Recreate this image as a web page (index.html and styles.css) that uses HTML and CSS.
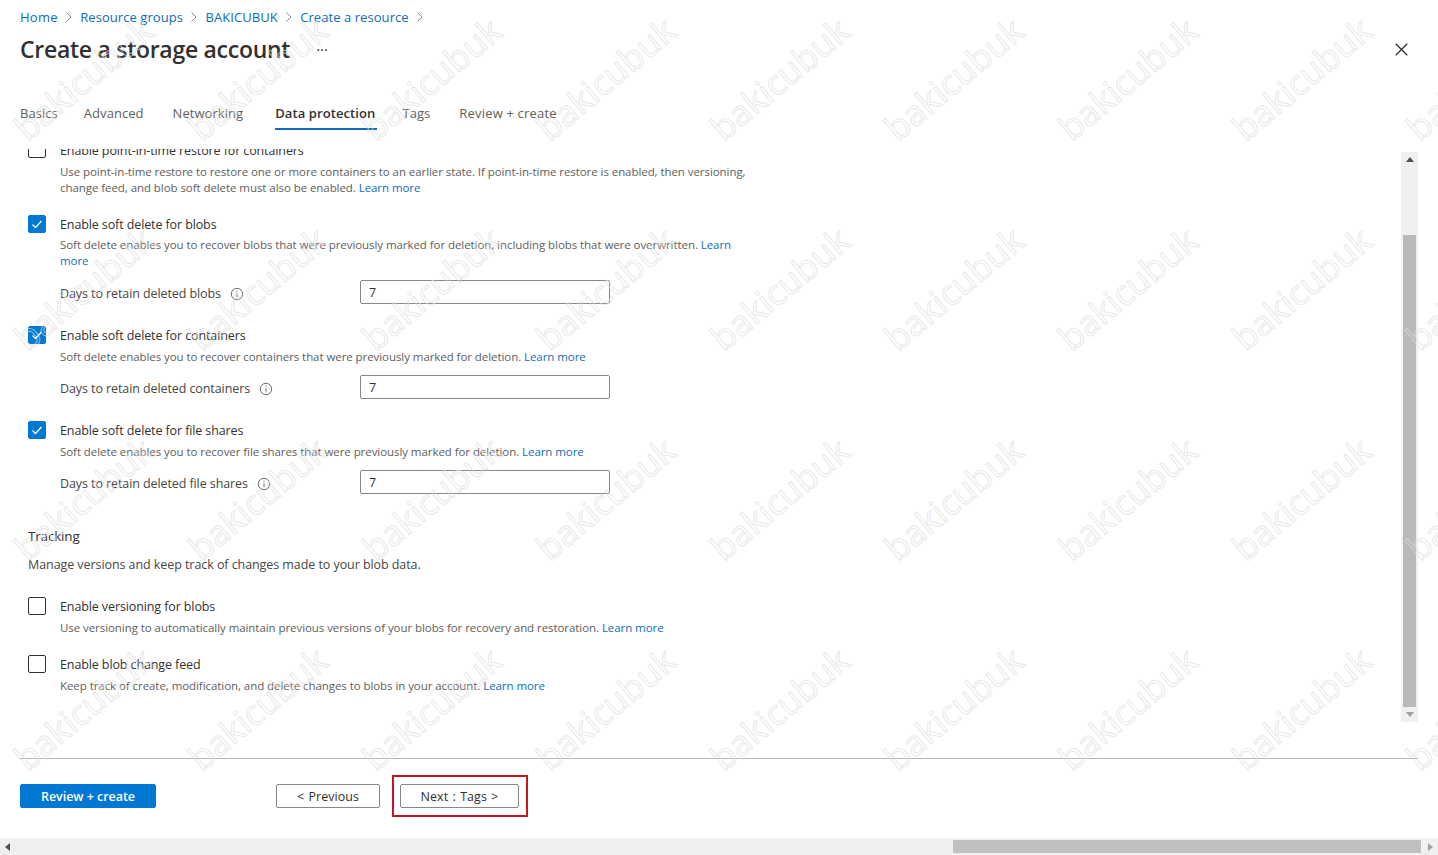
FILE: index.html
```html
<!DOCTYPE html>
<html lang="en">
<head>
<meta charset="utf-8">
<title>Create a storage account</title>
<link rel="stylesheet" href="styles.css">
</head>
<body>
<div class="page">
  <div class="blade">
    <header class="head">
      <nav class="crumbs">
        <a class="home">Home</a><svg class="chev" viewBox="0 0 8 12"><path d="M1.500 1.500 6 6l-4.500 4.500"/></svg>
        <a>Resource groups</a><svg class="chev" viewBox="0 0 8 12"><path d="M1.500 1.500 6 6l-4.500 4.500"/></svg>
        <a>BAKICUBUK</a><svg class="chev" viewBox="0 0 8 12"><path d="M1.500 1.500 6 6l-4.500 4.500"/></svg>
        <a>Create a resource</a><svg class="chev" viewBox="0 0 8 12"><path d="M1.500 1.500 6 6l-4.500 4.500"/></svg>
      </nav>
      <div class="titlebar">
        <h1>Create a storage account</h1>
        <span class="more">···</span>
        <svg class="close" viewBox="0 0 12 12"><path d="M.7.7l10.600 10.600M11.300.7.700 11.300"/></svg>
      </div>
      <div class="tabs">
        <span class="tab t1">Basics</span>
        <span class="tab t2">Advanced</span>
        <span class="tab t3">Networking</span>
        <span class="tab t4 active">Data protection</span>
        <span class="tab t5">Tags</span>
        <span class="tab t6">Review + create</span>
      </div>
    </header>

    <div class="body">
      <main class="form">
        <div class="form-inner">
          <section class="opt first">
            <span class="box"></span>
            <div class="opt-text">
              <div class="lbl">Enable point-in-time restore for containers</div>
              <p class="desc">Use point-in-time restore to restore one or more containers to an earlier state. If point-in-time restore is enabled, then versioning,<br>change feed, and blob soft delete must also be enabled. <a>Learn more</a></p>
            </div>
          </section>

          <section class="opt">
            <span class="box on"><svg viewBox="0 0 18 18"><path d="M4.500 9.500 7.500 12.500 13.500 6"/></svg></span>
            <div class="opt-text">
              <div class="lbl">Enable soft delete for blobs</div>
              <p class="desc tight">Soft delete enables you to recover blobs that were previously marked for deletion, including blobs that were overwritten. <a>Learn<br>more</a></p>
              <div class="days days-a">
                <span class="days-lbl">Days to retain deleted blobs<svg class="info" viewBox="0 0 14 14"><circle cx="7" cy="7" r="5.700"/><path d="M7 6.200v4M7 3.700v1.200"/></svg></span>
                <span class="field">7</span>
              </div>
            </div>
          </section>

          <section class="opt">
            <span class="box on"><svg viewBox="0 0 18 18"><path d="M4.500 9.500 7.500 12.500 13.500 6"/></svg></span>
            <div class="opt-text">
              <div class="lbl">Enable soft delete for containers</div>
              <p class="desc">Soft delete enables you to recover containers that were previously marked for deletion. <a>Learn more</a></p>
              <div class="days">
                <span class="days-lbl">Days to retain deleted containers<svg class="info" viewBox="0 0 14 14"><circle cx="7" cy="7" r="5.700"/><path d="M7 6.200v4M7 3.700v1.200"/></svg></span>
                <span class="field">7</span>
              </div>
            </div>
          </section>

          <section class="opt">
            <span class="box on"><svg viewBox="0 0 18 18"><path d="M4.500 9.500 7.500 12.500 13.500 6"/></svg></span>
            <div class="opt-text">
              <div class="lbl">Enable soft delete for file shares</div>
              <p class="desc">Soft delete enables you to recover file shares that were previously marked for deletion. <a>Learn more</a></p>
              <div class="days">
                <span class="days-lbl">Days to retain deleted file shares<svg class="info" viewBox="0 0 14 14"><circle cx="7" cy="7" r="5.700"/><path d="M7 6.200v4M7 3.700v1.200"/></svg></span>
                <span class="field">7</span>
              </div>
            </div>
          </section>

          <h2>Tracking</h2>
          <p class="intro">Manage versions and keep track of changes made to your blob data.</p>

          <section class="opt track">
            <span class="box"></span>
            <div class="opt-text">
              <div class="lbl">Enable versioning for blobs</div>
              <p class="desc">Use versioning to automatically maintain previous versions of your blobs for recovery and restoration. <a>Learn more</a></p>
            </div>
          </section>

          <section class="opt track2">
            <span class="box"></span>
            <div class="opt-text">
              <div class="lbl">Enable blob change feed</div>
              <p class="desc">Keep track of create, modification, and delete changes to blobs in your account. <a>Learn more</a></p>
            </div>
          </section>
        </div>
      </main>
      <div class="vscroll">
        <span class="arrow up"></span>
        <span class="vthumb"></span>
        <span class="arrow down"></span>
      </div>
    </div>

    <footer class="foot">
      <button class="btn primary">Review + create</button>
      <button class="btn prev">&lt; Previous</button>
      <div class="mark"><button class="btn next">Next : Tags &gt;</button></div>
    </footer>
  </div>

  <div class="hscroll">
    <span class="arrow left"></span>
    <span class="hthumb"></span>
    <span class="arrow right"></span>
  </div>

  <div class="wm" aria-hidden="true">
    <span>bakicubuk</span><span>bakicubuk</span><span>bakicubuk</span><span>bakicubuk</span><span>bakicubuk</span><span>bakicubuk</span><span>bakicubuk</span><span>bakicubuk</span><span>bakicubuk</span>
    <span>bakicubuk</span><span>bakicubuk</span><span>bakicubuk</span><span>bakicubuk</span><span>bakicubuk</span><span>bakicubuk</span><span>bakicubuk</span><span>bakicubuk</span><span>bakicubuk</span>
    <span>bakicubuk</span><span>bakicubuk</span><span>bakicubuk</span><span>bakicubuk</span><span>bakicubuk</span><span>bakicubuk</span><span>bakicubuk</span><span>bakicubuk</span><span>bakicubuk</span>
    <span>bakicubuk</span><span>bakicubuk</span><span>bakicubuk</span><span>bakicubuk</span><span>bakicubuk</span><span>bakicubuk</span><span>bakicubuk</span><span>bakicubuk</span><span>bakicubuk</span>
  </div>
</div>
</body>
</html>
```
FILE: styles.css
```css
* { box-sizing: border-box; }
html, body { margin: 0; padding: 0; background: #fff; }
body { font-family: "Open Sans", "Noto Sans", sans-serif; color: #323130; overflow: hidden; }
p, h1, h2 { margin: 0; }
a { color: #0f6cbd; }

.page { position: relative; width: 1438px; height: 855px; overflow: hidden; display: flex; flex-direction: column; background: #fff; }
.blade { height: 838px; display: flex; flex-direction: column; }

.head { height: 149px; padding: 0 20px; flex: none; }
.crumbs { height: 34px; display: flex; align-items: center; font-size: 13px; letter-spacing: .06px; }
.crumbs a { color: #0f6cbd; }
.crumbs .home { letter-spacing: .25px; }
.chev { width: 8px; height: 12px; margin-left: 7px; margin-right: 7.500px; fill: none; stroke: #8a8886; stroke-width: 1; }

.titlebar { height: 30px; display: flex; align-items: center; }
.titlebar h1 { font-size: 23px; font-weight: 600; letter-spacing: -.28px; color: #323130; white-space: nowrap; }
.more { margin-left: 26px; font-size: 15px; line-height: 16px; color: #323130; }
.close { width: 13px; height: 13px; margin-left: auto; margin-right: 10px; fill: none; stroke: #323130; stroke-width: 1.200; }

.tabs { margin-top: 32px; height: 34px; display: flex; align-items: center; font-size: 13px; letter-spacing: .05px; color: #605e5c; }
.tab { display: flex; height: 34px; align-items: center; margin-right: 29px; white-space: nowrap; }
.t1 { margin-right: 26px; }
.t3 { margin-right: 32px; }
.t4 { margin-right: 25px; }
.t6 { letter-spacing: .18px; }
.active { font-weight: 600; letter-spacing: .1px; color: #323130; border-bottom: 2px solid #0f6cbd; padding-right: 2px; padding-top: 2px; }

.body { height: 573px; display: flex; flex: none; }
.form { flex: 1; overflow: hidden; }
.form-inner { margin-top: -9px; padding-left: 28px; }

.opt { display: grid; grid-template-columns: 32px 1fr; margin-bottom: 21px; }
.opt.first { margin-bottom: 18px; }
.first .box { margin-top: 0; }
.box { display: block; width: 18px; height: 18px; margin-top: 1px; border: 1px solid #323130; border-radius: 2px; background: #fff; }
.box svg { display: block; margin: -1px; width: 18px; height: 18px; fill: none; stroke: #fff; stroke-width: 1.300; }
.box.on { background: #0078d4; border-color: #0078d4; }
.lbl { height: 20px; padding-top: 1px; font-size: 12.500px; line-height: 20px; letter-spacing: -.11px; color: #323130; white-space: nowrap; }
.desc { margin-top: 4px; font-size: 11.500px; line-height: 16px; letter-spacing: -.065px; color: #605e5c; white-space: nowrap; }
.desc.tight { margin-top: 3px; }
.desc a { color: #0f6cbd; }

.days { display: grid; grid-template-columns: 300px 250px; align-items: center; margin-top: 10px; height: 24px; }
.days-a { margin-top: 11px; }
.days-lbl { display: flex; align-items: center; padding-top: 3px; font-size: 12.500px; letter-spacing: -.09px; color: #484644; white-space: nowrap; }
.info { width: 14px; height: 14px; margin-left: 9px; fill: none; stroke: #605e5c; stroke-width: .900; }
.field { height: 24px; padding: 0 8px; display: flex; align-items: center; font-size: 12.500px; border: 1px solid #8a8886; border-radius: 2px; color: #323130; }

h2 { margin-top: 32px; font-size: 13.500px; line-height: 20px; font-weight: 500; letter-spacing: -.18px; color: #323130; }
.intro { margin-top: 9px; font-size: 12.500px; line-height: 20px; letter-spacing: -.07px; color: #484644; }
.opt.track { margin-top: 21px; margin-bottom: 18px; }

.vscroll { width: 17px; height: 570px; margin: 3px 20px 0 0; background: #f0f0f0; display: flex; flex-direction: column; align-items: center; }
.vthumb { width: 13px; height: 472px; margin-top: 73px; background: #b9b9b9; }
.arrow { display: block; width: 0; height: 0; border: 4px solid transparent; }
.up { border-top: 0; border-bottom: 5px solid #505050; margin-top: 5px; }
.down { margin-top: 5px; border-bottom: 0; border-top: 5px solid #a0a0a0; }

.foot { flex: none; margin: 36px 20px 0 20px; border-top: 1px solid #b8b8b8; display: flex; align-items: flex-start; height: 80px; }
.btn { height: 24px; font-family: inherit; font-size: 12.500px; letter-spacing: .05px; word-spacing: 1px; border-radius: 2px; padding: 0; background: #fff; color: #323130; border: 1px solid #8a8886; }
.primary { width: 136px; margin-top: 25px; font-weight: 600; letter-spacing: -.04px; word-spacing: 0; color: #fff; background: #0078d4; border-color: #0078d4; }
.prev { width: 104px; margin-top: 25px; margin-left: 120px; }
.mark { margin-left: 12px; margin-top: 16px; padding: 7px 7px 7px 6px; border: 2px solid #c8141e; }
.next { display: block; width: 119px; }

.hscroll { height: 17px; flex: none; background: #f0f0f0; display: flex; align-items: center; }
.hthumb { width: 468px; height: 13px; margin-left: auto; background: #c0c0c0; }
.left { margin-left: 5px; border-left: 0; border-right: 5px solid #505050; }
.right { margin: 0 5px 0 7px; border-right: 0; border-left: 5px solid #a0a0a0; }

.wm { position: absolute; left: -4px; top: -27px; display: grid; grid-template-columns: repeat(9, 174px); grid-template-rows: repeat(4, 210px); pointer-events: none; }
.wm span { display: flex; align-items: center; justify-content: center; font-family: "Open Sans", sans-serif; font-size: 35px; color: transparent; -webkit-text-stroke: 1px rgba(222, 222, 222, .7); transform: rotate(-40deg); white-space: nowrap; }
```
